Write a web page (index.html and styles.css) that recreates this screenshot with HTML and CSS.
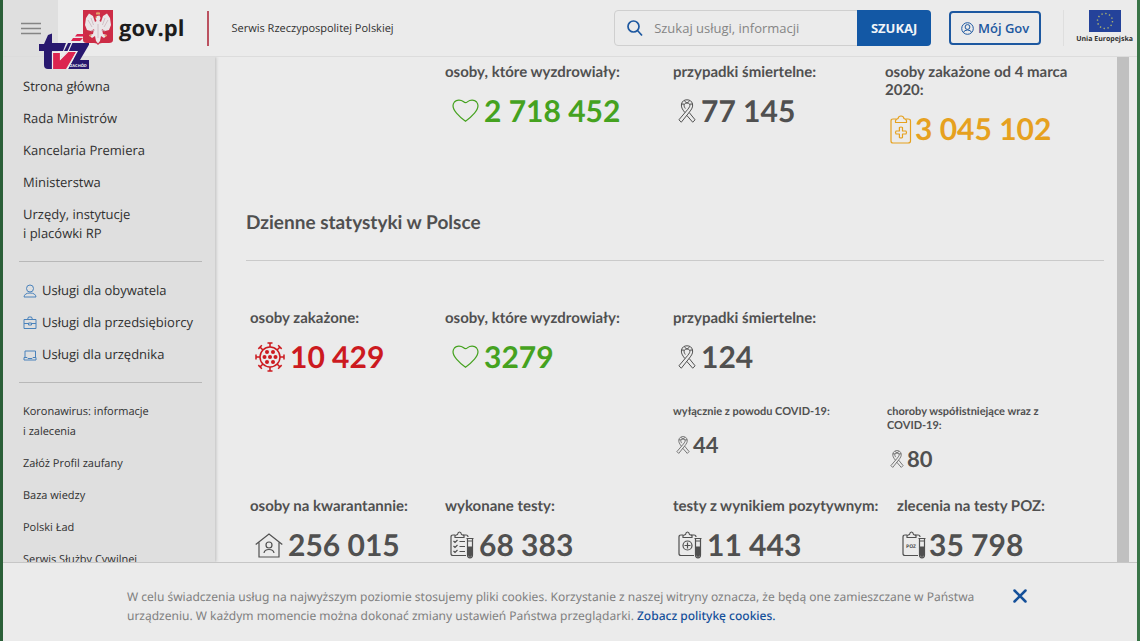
FILE: index.html
```html
<!DOCTYPE html>
<html lang="pl">
<head>
<meta charset="utf-8">
<title>gov.pl – Serwis Rzeczypospolitej Polskiej</title>
<meta name="viewport" content="width=device-width, initial-scale=1">
<link rel="stylesheet" href="styles.css">
</head>
<body>
<svg class="symbols" aria-hidden="true">
  <symbol id="heart" viewBox="0 0 27 24"><path d="M13.500 22.200C11 20.500 7.500 17.800 4.500 14.200C.8 9.800.4 5.500 2.400 3C4.800.3 9.200 1 11.300 2.600Q12.700 3.700 13.500 3.700T15.700 2.600C17.800 1 22.200.3 24.600 3C26.600 5.500 26.200 9.800 22.500 14.200C19.500 17.800 16 20.500 13.500 22.200Z" fill="none" stroke="currentColor" stroke-width="1.200"/></symbol>
  <symbol id="ribbon" viewBox="0 0 18 24"><g fill="none" stroke="currentColor" stroke-width="1" stroke-linejoin="round"><path d="M3.500 5C4.200 2 6.300.8 9 .8S13.800 2 14.500 5C15.200 8 13.600 10.300 11.300 13.200L3.300 23.200L.9 20.800L9.500 10.700C11.300 8.400 12.500 6.700 11.600 5.200C11 4.200 10 4.100 9 4.100S7 4.200 6.400 5.200C5.700 6.500 6.300 8 7.300 9.500"/><path d="M3.500 5C2.900 8 4.300 10.200 6.800 13.500M8.800 16.400L14.700 23.200L17.100 20.800L11.200 13.500M3.500 5L6.400 5.200M14.500 5L11.600 5.200M6.400 2L9 4.100L11.600 2"/></g></symbol>
  <symbol id="clip" viewBox="0 0 22 29"><g fill="none" stroke="currentColor" stroke-width="1.200" stroke-linejoin="round"><path d="M6 4H3Q1 4 1 6V26Q1 28 3 28H18Q20.500 28 20.500 26V6Q20.500 4 18 4H16"/><path d="M5.500 7.500Q5 4 8 3.700Q8.500 1 11 1T14 3.700Q17 4 16.500 7.500Z"/><path d="M9.400 12.500Q11 11.500 12.500 12.500V16H16Q17 17.500 16 19H12.500V22.500Q11 23.500 9.400 22.500V19H6Q5 17.500 6 16H9.400Z"/></g></symbol>
  <symbol id="virus" viewBox="-15 -15 30 30"><circle r="10" fill="none" stroke="currentColor" stroke-width="1.500"/><g fill="currentColor"><circle r="2"/><circle cx="-5.500" r="2"/><circle cx="5.500" r="2"/><circle cx="-3" cy="-5" r="2"/><circle cx="3" cy="-5" r="2"/><circle cx="-3" cy="5" r="2"/><circle cx="3" cy="5" r="2"/></g><g fill="none" stroke="currentColor" stroke-width="1.500"><path id="spike" d="M0-10V-14M-2.500-14H2.500"/><use href="#spike" transform="rotate(45)"/><use href="#spike" transform="rotate(90)"/><use href="#spike" transform="rotate(135)"/><use href="#spike" transform="rotate(180)"/><use href="#spike" transform="rotate(225)"/><use href="#spike" transform="rotate(270)"/><use href="#spike" transform="rotate(315)"/></g></symbol>
  <symbol id="home" viewBox="0 0 28 25"><g fill="none" stroke="currentColor" stroke-width="1.200"><path d="M.7 11.500L14 1L27.300 11.500M4 9.500V24H24V9.500"/><circle cx="14" cy="12" r="3"/><path d="M9 20Q9.500 16.500 14 16.500T19 20"/></g></symbol>
  <symbol id="sheet" viewBox="0 0 24 28"><g fill="none" stroke="currentColor" stroke-width="1.200" stroke-linejoin="round"><path d="M5 4H3Q1 4 1 6V22.500Q1 24.500 3 24.500H16M13 4H16Q18 4 18 6"/><path d="M5 6.500V4.500L7.500 3.500Q8 1 9.500 1T11.500 3.500L14 4.500V6.500Z"/><path d="M16.500 7.500H23.500M17.500 7.500V24Q17.500 26.800 20 26.800T22.500 24V7.500M17.500 10H22.500"/></g><path d="M18 15.500H22V24Q22 26 20 26T18 24Z" fill="currentColor"/></symbol>
  <symbol id="tests" viewBox="0 0 24 28"><use href="#sheet"/><path d="M3.500 10L5 11.500L7.500 9M9.500 10.500H15M3.500 15L5 16.500L7.500 14M9.500 15.500H15M3.500 20L5 21.500L7.500 19M9.500 20.500H15" fill="none" stroke="currentColor" stroke-width="1.200"/></symbol>
  <symbol id="positive" viewBox="0 0 24 28"><use href="#sheet"/><g fill="none" stroke="currentColor" stroke-width="1.200"><circle cx="9.500" cy="14.500" r="4.500"/><path d="M6.500 14.500H12.500M9.500 11.500V17.500"/></g></symbol>
</svg>

<header class="topbar">
  <button class="menu" aria-label="Menu"><svg width="20" height="13" viewBox="0 0 20 13"><path d="M0 1.500H20M0 6.500H20M0 11.500H20" stroke="#858585" stroke-width="1.500"/></svg></button>
  <a class="brand" href="#">
    <svg width="30" height="36" viewBox="0 0 30 36" aria-hidden="true"><path d="M0 0H30V30Q30 33 26 33H19Q16 33 15 35Q14 33 11 33H4Q0 33 0 30Z" fill="#cd2c46"/><path d="M14 6L16.500 5.500L17.500 8L16.500 11L18 12L20 6L24 3.500L27 8L28 15L26 20L22 21L19 19L20 24L24 25L21 28L18 26L17 31L15 33.500L13 31L12 26L9 28L6 25L10 24L11 19L8 21L4 20L2 15L3 8L6 3.500L10 6L12 12L13.500 11L12.500 8Z" fill="#ebe6e8"/><path d="M5 10L9 17M8 8L10.500 15M25 10L21 17M22 8L19.500 15M15 14V28M8 21L12 20M22 21L18 20" stroke="#c9b5bc" stroke-width=".8"/><path d="M13 4V2L14 3L15 1.500L16 3L17 2V4.500H13ZM12 7L14 6V8ZM6 25L9 25L7 27ZM24 25L21 25L23 27Z" fill="#e4a46a"/></svg>
    <span>gov.pl</span>
  </a>
  <p class="tagline">Serwis Rzeczypospolitej Polskiej</p>
  <form class="search" role="search">
    <label for="q" aria-label="Szukaj"><svg width="16" height="17" viewBox="0 0 16 17"><circle cx="6.500" cy="6.500" r="5.500" fill="none" stroke="#1d58a0" stroke-width="1.700"/><path d="M10.500 10.500L15 15.500" stroke="#1d58a0" stroke-width="1.700"/></svg></label>
    <input id="q" type="text" placeholder="Szukaj usługi, informacji">
    <button type="button">SZUKAJ</button>
  </form>
  <button class="mygov"><svg width="13" height="13" viewBox="0 0 13 13"><g fill="none" stroke="#1d58a0"><circle cx="6.500" cy="6.500" r="5.800"/><circle cx="6.500" cy="5" r="2.400"/><path d="M2.500 10.500Q3 8 6.500 8T10.500 10.500"/></g></svg>Mój Gov</button>
  <a class="eu" href="#">
    <svg width="32" height="22" viewBox="0 0 32 22" aria-hidden="true"><path d="M0 0H32V22H0Z" fill="#24429a"/><circle cx="16" cy="11" r="7.500" fill="none" stroke="#a9b070" stroke-width="1.400" stroke-dasharray="1.400 2.527"/></svg>
    <span>Unia Europejska</span>
  </a>
  <svg class="station" width="52" height="37" viewBox="0 0 52 37" role="img" aria-label="TVŻ Zachód">
    <path d="M15 .5V10H29L26 18H15V36H11Q7 36 7 32V18H2V11H7L11 2Z" fill="#28186f"/>
    <path d="M31 10H53L43 27H53V36H31L36 27L40 18H27Z" fill="#28186f"/>
    <path d="M16 20H23V27L30 19H39L29 36H16Z" fill="#dc2450"/>
    <path d="M15.500 36V19.500H23.500V26L31 18.500H40L30 36.500M31 18.500L35 9.500" fill="none" stroke="#eee" stroke-width="1.200"/>
    <path d="M40 1H49L47 3.500H38ZM36 5H46L43 8H34Z" fill="#dc2450"/>
    <text x="33" y="34" class="station-text">ZACHÓD</text>
  </svg>
</header>

<div class="middle">
  <nav class="side">
    <ul>
      <li><a href="#">Strona główna</a></li>
      <li><a href="#">Rada Ministrów</a></li>
      <li><a href="#">Kancelaria Premiera</a></li>
      <li><a href="#">Ministerstwa</a></li>
      <li><a href="#">Urzędy, instytucje<br>i placówki RP</a></li>
    </ul>
    <ul class="services">
      <li><a href="#"><svg width="14" height="14" viewBox="0 0 14 14"><g><circle cx="7" cy="4.500" r="3.500"/><path d="M1 13Q1.500 9 7 9T13 13Z"/></g></svg>Usługi dla obywatela</a></li>
      <li><a href="#"><svg width="14" height="14" viewBox="0 0 14 14"><path d="M1 3.500H13V12.500H1ZM4.500 3.500L5.500 1H8.500L9.500 3.500M1 7.500H5.500M8.500 7.500H13M5.500 7H8.500V9H5.500Z"/></svg>Usługi dla przedsiębiorcy</a></li>
      <li><a href="#"><svg width="14" height="14" viewBox="0 0 14 14"><path d="M2 9.500V3H12.500V9.500M1 9.500H4L5 10.500H9L10 9.500H13V12H1Z"/></svg>Usługi dla urzędnika</a></li>
    </ul>
    <ul class="small">
      <li><a href="#">Koronawirus: informacje<br>i zalecenia</a></li>
      <li><a href="#">Załóż Profil zaufany</a></li>
      <li><a href="#">Baza wiedzy</a></li>
      <li><a href="#">Polski Ład</a></li>
      <li><a href="#">Serwis Służby Cywilnej</a></li>
    </ul>
  </nav>

  <main class="content">
    <section class="stats total">
      <div class="stat green c2"><h3>osoby, które wyzdrowiały:</h3><p><svg width="27" height="24"><use href="#heart"/></svg>2 718 452</p></div>
      <div class="stat c3"><h3>przypadki śmiertelne:</h3><p><svg width="18" height="24"><use href="#ribbon"/></svg>77 145</p></div>
      <div class="stat orange c4"><h3>osoby zakażone od 4 marca 2020:</h3><p><svg width="22" height="29"><use href="#clip"/></svg>3 045 102</p></div>
    </section>
    <h2>Dzienne statystyki w Polsce</h2>
    <section class="stats daily">
      <div class="stat red"><h3>osoby zakażone:</h3><p><svg width="30" height="30"><use href="#virus"/></svg>10 429</p></div>
      <div class="stat green"><h3>osoby, które wyzdrowiały:</h3><p><svg width="27" height="24"><use href="#heart"/></svg>3279</p></div>
      <div class="stat"><h3>przypadki śmiertelne:</h3><p><svg width="18" height="24"><use href="#ribbon"/></svg>124</p></div>
      <div class="stat minor c3"><h3>wyłącznie z powodu COVID-19:</h3><p><svg width="14" height="18"><use href="#ribbon"/></svg>44</p></div>
      <div class="stat minor c4"><h3>choroby współistniejące wraz z COVID-19:</h3><p><svg width="14" height="18"><use href="#ribbon"/></svg>80</p></div>
      <div class="stat"><h3>osoby na kwarantannie:</h3><p><svg width="28" height="25"><use href="#home"/></svg>256 015</p></div>
      <div class="stat"><h3>wykonane testy:</h3><p><svg width="24" height="28"><use href="#tests"/></svg>68 383</p></div>
      <div class="stat"><h3>testy z wynikiem pozytywnym:</h3><p><svg width="24" height="28"><use href="#positive"/></svg>11 443</p></div>
      <div class="stat last"><h3>zlecenia na testy POZ:</h3><p><svg width="24" height="28"><use href="#sheet"/><text x="4" y="17" class="poz-text">POZ</text></svg>35 798</p></div>
    </section>
  </main>
  <div class="track"></div>
</div>

<footer class="cookies">
  <p>W celu świadczenia usług na najwyższym poziomie stosujemy pliki cookies. Korzystanie z naszej witryny oznacza, że będą one zamieszczane w Państwa urządzeniu. W każdym momencie można dokonać zmiany ustawień Państwa przeglądarki. <a href="#">Zobacz politykę cookies.</a></p>
  <button aria-label="Zamknij"><svg width="14" height="14" viewBox="0 0 14 14"><path d="M1.500 1.500L12.500 12.500M12.500 1.500L1.500 12.500" stroke="#15509a" stroke-width="2.500" stroke-linecap="round"/></svg></button>
</footer>
</body>
</html>
```

FILE: styles.css
```css
* { box-sizing: border-box; margin: 0; padding: 0; }

body {
  display: flex;
  flex-direction: column;
  height: 100vh;
  overflow: hidden;
  border-left: 3px solid #2b5f38;
  border-right: 3px solid #397447;
  background: #ebebeb;
  color: #303030;
  font-family: "Open Sans", "Noto Sans", sans-serif;
  font-size: 13px;
  text-rendering: geometricPrecision;
}

a { color: inherit; text-decoration: none; }
ul { list-style: none; }
button { border: 0; background: none; font: inherit; cursor: pointer; }
.symbols { position: absolute; width: 0; height: 0; }
.poz-text { font: bold 5px "Open Sans", sans-serif; fill: currentColor; }

.topbar {
  position: relative;
  display: flex;
  align-items: center;
  flex: none;
  height: 57px;
  border-bottom: 1px solid #dcdcdc;
}
.menu { align-self: stretch; width: 55px; background: #dfdfdf; }
.menu svg { display: block; margin: 0 auto; }
.brand {
  display: flex;
  align-items: center;
  gap: 6px;
  margin-left: 25px;
  padding-right: 23px;
  border-right: 2px solid #bb5260;
  height: 35px;
  color: #1c1c1c;
  font-size: 22px;
  font-weight: 700;
}
.tagline { margin-left: 22px; font-size: 11px; }
.search {
  display: flex;
  align-items: center;
  width: 317px;
  height: 36px;
  margin-left: auto;
  border: 1px solid #cfcfcf;
  border-radius: 4px;
}
.search label { display: flex; padding-left: 12px; }
.search input {
  flex: 1;
  min-width: 0;
  padding-left: 11px;
  border: 0;
  outline: 0;
  background: none;
  font: inherit;
}
.search input::placeholder { color: #858585; }
.search button {
  width: 74px;
  height: 36px;
  margin-right: -1px;
  border-radius: 0 4px 4px 0;
  background: #1358a5;
  color: #f0f4f8;
  font-weight: 700;
}
.mygov {
  display: flex;
  align-items: center;
  justify-content: center;
  gap: 4px;
  width: 92px;
  height: 34px;
  margin-left: 18px;
  border: 2px solid #1d58a0;
  border-radius: 4px;
  color: #1d58a0;
  font-weight: 600;
}
.eu {
  display: flex;
  flex-direction: column;
  align-items: center;
  gap: 3px;
  height: 36px;
  margin-left: 22px;
  padding: 0 4px 0 12px;
  border-left: 1px solid #dedede;
  font-size: 7px;
  font-weight: 700;
  line-height: 10px;
}
.station { position: absolute; left: 34px; top: 33px; z-index: 2; }
.station-text { font: bold 4px "Open Sans", sans-serif; fill: #f4f4f4; }

.middle { display: flex; flex: 1; min-height: 0; overflow: hidden; }
.side {
  flex: none;
  width: 212px;
  padding: 20px 13px 0 16px;
  background: #dfdfdf;
  box-shadow: 1px 0 3px #bdbdbd;
  line-height: 19px;
}
.side ul { display: grid; gap: 13px; padding-left: 4px; }
.side ul + ul { margin: 18px 0 0 0; padding-top: 19px; border-top: 1px solid #b8b8b8; }
.services a { display: flex; align-items: center; gap: 5px; }
.services svg { fill: none; stroke: #4a82bb; }
.side .small { gap: 12px; font-size: 11px; line-height: 20px; }

.content {
  flex: 1;
  min-width: 0;
  overflow: hidden;
  padding: 6px 13px 0 31px;
  color: #505050;
  font-family: Lato, sans-serif;
}
.stats {
  display: grid;
  grid-template-columns: 195fr 228fr 212fr 219fr;
  padding-left: 4px;
  line-height: 18px;
}
.stat h3 { font-size: 15px; font-weight: 700; }
.stat p {
  display: flex;
  align-items: center;
  gap: 5px;
  height: 36px;
  margin-top: 12px;
  padding-left: 5px;
  font-size: 30px;
  font-weight: 700;
}
.total .c4 { padding-right: 24px; }
.c2 { grid-column: 2; }
.c3 { grid-column: 3; }
.c4 { grid-column: 4; }
.green p { color: #45a21f; padding-left: 7px; }
.red p { color: #cc1a1f; }
.orange p { gap: 3px; color: #e6a11f; }
h2 {
  margin-top: 63px;
  padding-bottom: 24px;
  border-bottom: 1px solid #cacaca;
  font-size: 19px;
  line-height: 26px;
}
.daily { padding-top: 48px; }
.minor { margin: 30px 0 26px; line-height: 14px; }
.minor h3 { font-size: 11px; }
.minor p { height: 24px; margin-top: 14px; padding-left: 3px; gap: 3px; font-size: 22px; }
.minor.c4 { padding: 0 52px 0 2px; }
.last { padding-left: 12px; }
.last p { gap: 3px; }
.track { flex: none; width: 12px; margin-right: 8px; background: #c0c0c0; }

.cookies {
  display: flex;
  align-items: flex-start;
  gap: 16px;
  flex: none;
  padding: 24px 110px 16px 124px;
  border-top: 1px solid #c6c6c6;
  background: #ebebeb;
  color: #808080;
  font-family: "Noto Sans", "Open Sans", sans-serif;
  font-size: 12px;
  line-height: 19px;
}
.cookies p { flex: 1; }
.cookies p a { color: #15509a; font-weight: 500; }
.cookies button { display: flex; padding: 2px 0; }
```
